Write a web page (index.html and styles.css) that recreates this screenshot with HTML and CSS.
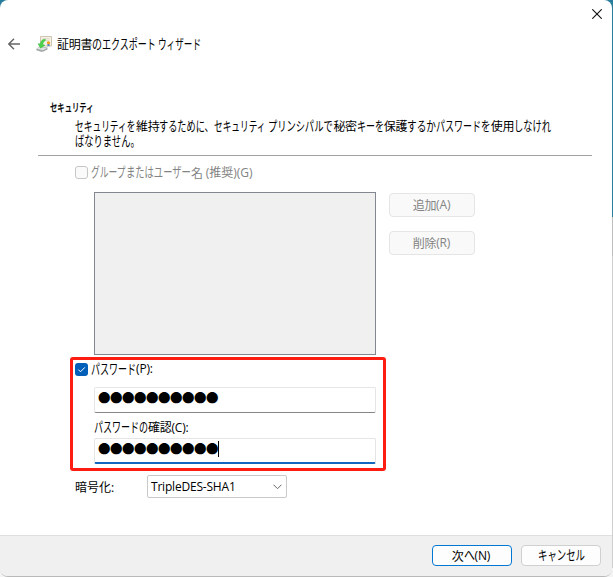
FILE: index.html
```html
<!DOCTYPE html>
<html lang="ja">
<head>
<meta charset="utf-8">
<title>証明書のエクスポート ウィザード</title>
<link rel="stylesheet" href="styles.css">
</head>
<body>
<div class="window">
  <div class="titlebar">
    <svg class="close" viewBox="0 0 10 10"><path d="M.3.3l9.4 9.4M9.7.3L.3 9.7"/></svg>
  </div>
  <header class="wizard-head">
    <svg class="back" viewBox="0 0 12 12"><path d="M12 6H.8M6 .8L.8 6 6 11.2"/></svg>
    <svg class="cert" viewBox="0 0 16 16">
      <path d="M4.500 .5h11v9.500h-11z" fill="#f6f1e6" stroke="#cfc5b0"/>
      <path d="M6.500 2.800h7M10 4.800h3" stroke="#ddd4c4"/>
      <path d="M.3 13L3.500 10.500l8 1v2L7 15.800H5L.3 14.300z" fill="#a3a8aa"/>
      <path d="M.8 12.800L3.500 10.900l7.300 1-3.800 2.300z" fill="#e2e4e4"/>
      <path d="M9.300 3.200C6 3.300 4.800 5 4.300 7.800L2 7.700l2.500 4.500L9 9.200l-2.200-.6c.2-1.800 1-3.200 2.500-3.800z" fill="#4bd14c" stroke="#35b83c" stroke-width=".4"/>
      <path d="M11.500 7.500v3l1-.8 1 .8v-3z" fill="#3c72cf"/>
      <circle cx="12.500" cy="6.800" r="1.600" fill="#f3a11c"/>
    </svg>
    <h1>証明書<span class="kana n1 w10">の</span><span class="kana n6 w54 space">エクスポート</span><span class="kana n5 w43">ウィザード</span></h1>
  </header>
  <main>
    <h2><span class="kana n6 w44">セキュリティ</span></h2>
    <p class="desc"><span class="kana n7 w61">セキュリティを</span>維持<span class="kana n6 w55">するために、</span><span class="kana n6 w53 space">セキュリティ</span><span class="kana n7 w66">プリンシパルで</span>秘密<span class="kana n3 w27">キーを</span>保護<span class="kana n3 w29">するか</span><span class="kana n5 w45">パスワード</span><span class="kana n1 w9">を</span>使用<span class="kana n4 w37">しなけれ</span><br><span class="kana n7 w65">ばなりません。</span></p>
    <hr>
    <div class="check disabled"><span class="box"></span><span class="kana n4 w35">グループ</span><span class="kana n7 w65">またはユーザー</span>名<span class="latin gap">(推奨)(G)</span></div>
    <section class="principals">
      <div class="list"></div>
      <div class="side">
        <div class="btn off">追加<span class="latin">(A)</span></div>
        <div class="btn off">削除<span class="latin">(R)</span></div>
      </div>
    </section>
    <section class="password">
      <div class="check"><span class="box on"><svg viewBox="0 0 13 13"><path d="M3.300 6.600l2.200 2.200 4.300-4.400"/></svg></span><span class="kana n5 w45">パスワード</span><span class="latin">(P):</span></div>
      <div class="field"><span class="dots">●●●●●●●●●●</span></div>
      <div class="label"><span class="kana n6 w54">パスワードの</span>確認<span class="latin">(C):</span></div>
      <div class="field focus"><span class="dots">●●●●●●●●●●</span><span class="caret"></span></div>
    </section>
    <div class="cipher">
      <div class="name">暗号化<span class="latin">:</span></div>
      <div class="select"><span class="latin">TripleDES-SHA1</span><svg viewBox="0 0 9 6"><path d="M.5.7l4 4 4-4"/></svg></div>
    </div>
  </main>
  <footer>
    <div class="btn primary">次<span class="kana n1 w11">へ</span><span class="latin">(N)</span></div>
    <div class="btn"><span class="kana n5 w47">キャンセル</span></div>
  </footer>
</div>
</body>
</html>
```
FILE: styles.css
```css
* { box-sizing: border-box; }
body {
  margin: 0;
  height: 577px;
  overflow: hidden;
  background: linear-gradient(#287d9c 0 217px, #bdbdbd 217px 256px, #cfcfcf 256px 568px, #f4f4f4 568px);
  font: 12px/15px "Noto Sans CJK JP", sans-serif;
  letter-spacing: -0.3px;
  color: #000;
}
.window {
  width: 612px;
  height: 577px;
  display: flex;
  flex-direction: column;
  background: #fff;
  border-radius: 8px;
  border-bottom: 1px solid #b9b9b9;
  overflow: hidden;
}
.kana {
  display: inline-block;
  --em: 13.5;
  font-size: calc(var(--em) * 1px);
  width: calc(var(--w) * 1px);
  letter-spacing: 0;
  white-space: nowrap;
  vertical-align: top;
  transform-origin: left;
  transform: translateY(-1px) scaleX(calc(var(--w) / (var(--n) * var(--em))));
}
.n1 { --n: 1; } .n3 { --n: 3; } .n4 { --n: 4; } .n5 { --n: 5; }
.n6 { --n: 6; } .n7 { --n: 7; }
.w9 { --w: 9.5; } .w10 { --w: 10; } .w11 { --w: 11; } .w27 { --w: 27; }
.w29 { --w: 29; } .w35 { --w: 35; } .w37 { --w: 37; } .w43 { --w: 43; }
.w44 { --w: 44; } .w45 { --w: 45; } .w47 { --w: 47; } .w53 { --w: 52; }
.w54 { --w: 54; } .w55 { --w: 55; } .w61 { --w: 61; }
.w65 { --w: 65; } .w66 { --w: 65; }
.space { margin-right: 2px; }
.latin { font-family: "Open Sans", "Noto Sans CJK JP", sans-serif; letter-spacing: -0.15px; }
svg { fill: none; display: block; }
.titlebar { height: 33px; padding: 9px 10px; display: flex; justify-content: flex-end; }
.close { width: 10px; height: 10px; stroke: #111; stroke-width: 1.1; }
.wizard-head { height: 22px; padding-left: 8px; display: flex; align-items: center; }
.back { width: 12px; height: 12px; stroke: #666; stroke-width: 1.4; }
.cert { width: 16px; height: 16px; margin: 0 5px 0 16px; }
h1 { margin: 0; padding-bottom: 1px; font-size: 12px; font-weight: 400; line-height: 15px; white-space: nowrap; }
h1 .kana { transform: scaleX(calc(var(--w) / (var(--n) * var(--em)))); }
main { flex: 1; padding-top: 45px; }
h2 { margin: 0 0 3px 50px; font-size: 11px; line-height: 15px; font-weight: 500; }
h2 .kana { --em: 11; transform: scaleX(calc(var(--w) / (var(--n) * var(--em)))); -webkit-text-stroke: .2px #000; }
.desc { margin: 0 0 0 75px; height: 37px; white-space: nowrap; }
.desc .kana { transform: scaleX(calc(var(--w) / (var(--n) * var(--em)))); }
hr { margin: 0 20px 0 38px; border: 0; height: 1px; background: #a0a0a0; }
.check { display: flex; align-items: center; height: 15px; }
.box { width: 13px; height: 13px; margin-right: 3px; border: 1px solid #c6c6c6; border-radius: 3px; background: #fafafa; }
.box.on { border: 0; background: #005fb8; }
.box path { stroke: #fff; stroke-width: 1; }
.disabled { margin: 9px 0 0 75px; color: #838383; }
.gap { margin-left: 3px; letter-spacing: 0; }
.principals { display: flex; margin: 12px 0 0 94px; gap: 13px; }
.list { width: 282px; height: 163px; border: 1px solid #828790; background: #f0f0f0; }
.side { display: flex; flex-direction: column; gap: 14px; padding-top: 1px; }
.btn {
  width: 80px;
  height: 21px;
  display: flex;
  align-items: center;
  justify-content: center;
  border: 1px solid #d0d0d0;
  border-radius: 4px;
  background: #fdfdfd;
}
.btn.off { width: 86px; height: 24px; padding: 0 1px 2px 0; border-color: #e5e5e5; background: #f9f9f9; color: #838383; }
.btn.primary { border-color: #0078d4; padding-right: 2px; }
.password { width: 316px; height: 114px; margin: 2px 0 0 70px; border: 3px solid #fc1c12; border-radius: 3px; padding: 2px 7px 0 2px; }
.password .latin { position: relative; top: -1px; }
.field {
  height: 26px;
  margin: 10px 0 0 19px;
  padding-left: 3px;
  display: flex;
  align-items: center;
  border: 1px solid #e5e5e5;
  border-bottom-color: #868686;
  border-radius: 2px;
}
.focus { margin-top: 4px; border-bottom: 2px solid #1167c0; }
.label { margin: 6px 0 0 19px; height: 15px; }
.label .latin { top: 0; }
.label .kana { transform: scaleX(calc(var(--w) / (var(--n) * var(--em)))); }
.dots { width: 120px; font-size: 12.500px; letter-spacing: -0.500px; color: #000; margin-bottom: 5px; white-space: nowrap; }
.caret { width: 1px; height: 16px; margin-bottom: 3px; background: #000; }
.cipher { display: flex; align-items: center; margin: 4px 0 0 75px; }
.name { width: 72px; letter-spacing: 0; }
.select { width: 140px; height: 23px; border: 1px solid #c9c9c9; border-radius: 2px; padding: 0 4px 0 3px; display: flex; align-items: center; justify-content: space-between; }
.select .latin { letter-spacing: -0.2px; }
.select svg { width: 9px; height: 6px; stroke: #666; }
footer {
  height: 41px;
  padding: 9px 11px 0 0;
  display: flex;
  justify-content: flex-end;
  gap: 9px;
  background: #f0f0f0;
  border-top: 1px solid #dfdfdf;
}
```
